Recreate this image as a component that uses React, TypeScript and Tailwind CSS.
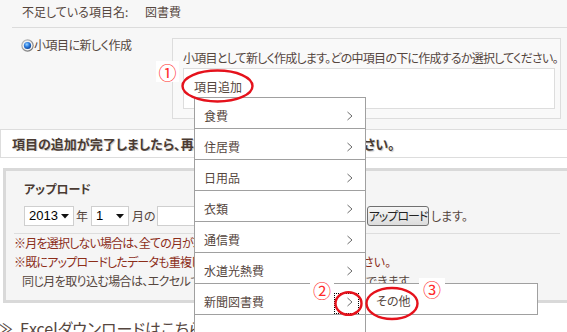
import React from "react";

const Chevron = () => (
  <svg width="6" height="10" viewBox="0 0 6 10" className="shrink-0">
    <polyline points="0.5,1 5,5 0.5,9" fill="none" stroke="#6a6a6a" strokeWidth="1" />
  </svg>
);

const Radio = () => (
  <svg width="13" height="13" viewBox="0 0 13 13" className="shrink-0">
    <defs>
      <linearGradient id="rg" x1="0" y1="0" x2="1" y2="1">
        <stop offset="0" stopColor="#c4c4c4" />
        <stop offset="1" stopColor="#6a6a6a" />
      </linearGradient>
      <radialGradient id="bd" cx="0.4" cy="0.35" r="0.7">
        <stop offset="0" stopColor="#9ad6ff" />
        <stop offset="0.5" stopColor="#2b7be0" />
        <stop offset="1" stopColor="#0d3f8a" />
      </radialGradient>
    </defs>
    <circle cx="6.5" cy="6.5" r="6.2" fill="url(#rg)" />
    <circle cx="6.5" cy="6.5" r="5.1" fill="#f2f2f2" />
    <circle cx="6.5" cy="6.5" r="3.6" fill="url(#bd)" />
  </svg>
);

const Select = ({ value, w }: { value: string; w: string }) => (
  <div
    className={`${w} h-[20px] shrink-0 bg-white border border-[#cfcfcf] flex items-center justify-between pl-[4px] pr-[4px] text-[13px] text-black [font-family:'Liberation_Sans',sans-serif]`}
  >
    <span>{value}</span>
    <svg width="8" height="5" viewBox="0 0 8 5">
      <polygon points="0,0 8,0 4,4.5" fill="#111" />
    </svg>
  </div>
);

const items = ["食費", "住居費", "日用品", "衣類", "通信費", "水道光熱費", "新聞図書費", ""];

export default function App() {
  return (
    <div className="relative w-[567px] h-[332px] overflow-hidden bg-white text-[12px] leading-[14px] text-[#55463e] [font-family:'Noto_Sans_CJK_JP',sans-serif] [font-feature-settings:'palt']">
      {/* Section 1 */}
      <div className="bg-[#f7f7f7] h-[130px] border-b border-[#dddddd]">
        <div className="ml-[12px] h-[28px] border-b border-[#dcdcdc] flex items-center pl-[10px] pb-[3px]">
          <span className="w-[123px]">不足している項目名:</span>
          <span>図書費</span>
        </div>
        <div className="flex">
          <div className="w-[172px] pl-[21px] pt-[10px]">
            <div className="flex items-center h-[14px] tracking-[-0.5px]">
              <Radio />
              <span>小項目に新しく作成</span>
            </div>
          </div>
          <div className="mt-[10px] w-[389px] h-[81px] border border-[#dddddd] bg-[#f9f9f9] pl-[10px] pt-[12px]">
            <div className="whitespace-nowrap tracking-[-0.75px]">
              小項目として新しく作成します。どの中項目の下に作成するか選択してください。
            </div>
            <div className="mt-[3px] w-[372px] h-[41px] border border-[#dddddd] bg-white pl-[10px] pt-[11px]">
              項目追加
            </div>
          </div>
        </div>
      </div>

      {/* Section 2 */}
      <div className="h-[28px] border-b border-l border-[#dddddd] flex items-center pl-[11px] text-[13px] font-bold text-[#4a3b33] [text-shadow:1px_1px_1px_#c8c8c8] whitespace-nowrap">
        <span className="inline-block w-[352px] overflow-hidden">項目の追加が完了しましたら、再度アップロードを行ってくだ</span>
        <span>さい。</span>
      </div>

      {/* Section 3 */}
      <div className="pt-[10px] pl-[3px]">
        <div className="w-[570px] h-[135px] border-[3px] border-[#d9d9d9] bg-[#f5f5f5]">
          <div className="pl-[18px] pt-[11px] font-bold text-[#4a3b33]">アップロード</div>
          <div className="mt-[10px] pl-[18px] h-[20px] flex items-center">
            <Select value="2013" w="w-[50px]" />
            <span className="w-[17px] pl-[2px] shrink-0">年</span>
            <Select value="1" w="w-[38px]" />
            <span className="w-[28px] pl-[3px] shrink-0">月の</span>
            <div className="w-[208px] h-[20px] shrink-0 bg-white border border-[#cfcfcf]" />
            <button className="ml-[2px] w-[62px] h-[20px] shrink-0 rounded-[3px] border border-[#707070] bg-[linear-gradient(#f6f6f6,#dcdcdc)] text-[12px] leading-[14px] text-[#222] whitespace-nowrap tracking-[-1px] flex items-center justify-center">
              アップロード
            </button>
            <span className="pl-[2px] shrink-0">します。</span>
          </div>
          <div className="mt-[7px] ml-[8px] w-[546px] border-t border-[#dddddd]" />
          <div className="-mt-[1px] leading-[19px] pl-[8px] whitespace-nowrap">
            <div className="text-[#8c2d19] tracking-[-0.8px]">※月を選択しない場合は、全ての月が取り込まれます。</div>
            <div className="text-[#8c2d19] flex">
              <span className="inline-block w-[349px] overflow-hidden tracking-[-0.8px]">
                ※既にアップロードしたデータも重複して取り込まれますので、ご注意くだ
              </span>
              <span>さい。</span>
            </div>
            <div className="pl-[8px] flex">
              <span className="inline-block w-[344px] overflow-hidden tracking-[-0.6px]">
                同じ月を取り込む場合は、エクセルで月別にシートを分けることが
              </span>
              <span>できます。</span>
            </div>
          </div>
        </div>
      </div>

      {/* Section 4 */}
      <div className="mt-[15px] text-[16px] leading-[20px] whitespace-nowrap flex">
        <span className="-ml-[3px] mr-[7px]">≫</span>
        <span>Excelダウンロードはこちら</span>
      </div>

      {/* Dropdown menu */}
      <div className="absolute left-[194px] top-[97px] w-[172px] bg-white border border-[#a0a0a0]">
        {items.map((it, i) => (
          <div
            key={i}
            className="relative h-[31px] border-b border-[#a0a0a0] flex items-center justify-between pl-[9px] pr-[12px] pt-[6px]"
          >
            <span>{it}</span>
            {it && <Chevron />}
            {i === 6 && (
              <div className="absolute left-[139px] top-[9px] w-[25px] h-[21px] border border-dotted border-black" />
            )}
          </div>
        ))}
      </div>

      {/* Submenu */}
      <div className="absolute left-[365px] top-[283px] w-[173px] h-[32px] bg-white border border-[#a0a0a0] flex items-center pl-[10px] pt-[4px]">
        その他
      </div>

      {/* Annotation numbers */}
      <div className="absolute left-[156px] top-[61px] w-[23px] h-[21px] bg-white flex items-center justify-center text-[18px] leading-[18px] text-[#ff2a2a] [font-feature-settings:normal]">
        ①
      </div>
      <div className="absolute left-[310px] top-[279px] w-[24px] h-[21px] bg-white flex items-center justify-center text-[18px] leading-[18px] text-[#ff2a2a] [font-feature-settings:normal]">
        ②
      </div>
      <div className="absolute left-[419px] top-[278px] w-[26px] h-[21px] bg-white flex items-center justify-center text-[18px] leading-[18px] text-[#ff2a2a] [font-feature-settings:normal]">
        ③
      </div>

      {/* Red ellipses */}
      <svg className="absolute left-0 top-0 pointer-events-none" width="567" height="332" viewBox="0 0 567 332">
        <ellipse cx="217.5" cy="86" rx="35" ry="15.5" fill="none" stroke="#e5121c" strokeWidth="2.4" />
        <ellipse cx="348.5" cy="303.5" rx="13" ry="11.3" fill="none" stroke="#e5121c" strokeWidth="2.4" />
        <ellipse cx="392" cy="303.5" rx="25.5" ry="15.5" fill="none" stroke="#e5121c" strokeWidth="2.4" />
      </svg>
    </div>
  );
}
